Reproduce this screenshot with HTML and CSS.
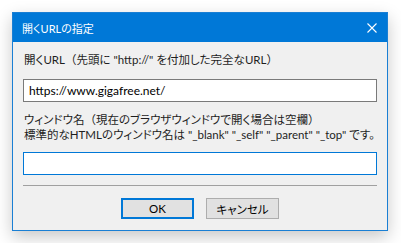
FILE: index.html
```html
<!DOCTYPE html>
<html>
<head>
	<meta charset="utf-8">
	<title>開くURLの指定</title>
	<link rel="stylesheet" href="styles.css">
</head>
<body>
	<div class=dialog>
		<div class=titlebar>
			<span class=title>開くURLの指定</span>
			<svg class=close width="10" height="10" viewBox="0 0 10 10">
				<path d="M0.5 0.5 L9.5 9.5 M9.5 0.5 L0.5 9.5" stroke="#fff" stroke-width="1.1" fill="none"/>
			</svg>
		</div>
		<div class=content>
			<label class=label for=url>開くURL<span class=wide>（</span>先頭に "http://" を付加した完全なURL<span class=wide>）</span></label>
			<input type=text id=url class=field value="https://www.gigafree.net/">
			<label class="label two" for=target>ウィンドウ名<span class=wide>（</span>現在のブラウザウィンドウで開く場合は空欄<span class=wide>）</span><br>標準的なHTMLのウィンドウ名は "_blank" "_self" "_parent" "_top" です。</label>
			<input type=text id=target class="field focus">
			<hr class=sep>
			<div class=buttons>
				<button type=button class="btn default">OK</button>
				<button type=button class=btn>キャンセル</button>
			</div>
		</div>
	</div>
</body>
</html>
```

FILE: styles.css
```css
* {
	box-sizing: border-box;
}
body {
	margin: 0;
	background: #fff;
	font-family: Lato, "Noto Sans CJK JP", sans-serif;
	font-size: 11.5px;
	font-feature-settings: "palt";
	color: #000;
}
.dialog {
	width: 376px;
	margin: 12px;
	border: 1px solid #1a7fd4;
	background: #f0f0f0;
	box-shadow: 0 6px 16px rgba(0,0,0,0.22);
}
.titlebar {
	height: 29px;
	background: #0078d7;
	color: #fff;
	display: flex;
	align-items: center;
	justify-content: space-between;
	padding: 0 10px 0 9px;
}
.title {
	font-size: 11px;
}
.content {
	padding: 10px 10px 11px 10px;
	display: flex;
	flex-direction: column;
}
.label {
	display: block;
	line-height: 16px;
	padding-left: 1px;
	color: #1e1e1e;
	white-space: nowrap;
}
.wide {
	font-feature-settings: normal;
}
.label.two {
	line-height: 15px;
	margin-top: 10px;
}
.field {
	display: block;
	width: 354px;
	height: 23px;
	margin: 11px 0 0 0;
	border: 1px solid #7a7a7a;
	background: #fff;
	font-family: inherit;
	font-size: 12px;
	font-feature-settings: "palt";
	padding: 0 5px;
	color: #000;
	outline: none;
}
.field.focus {
	border-color: #0078d7;
	margin-top: 10px;
}
.sep {
	width: 354px;
	margin: 10px 0 0 0;
	border: none;
	border-top: 1px solid #a0a0a0;
	height: 0;
}
.buttons {
	display: flex;
	justify-content: center;
	gap: 12px;
	margin-top: 12px;
}
.btn {
	width: 73px;
	height: 21px;
	background: #e1e1e1;
	border: 1px solid #adadad;
	font-family: inherit;
	font-size: 11.5px;
	font-feature-settings: "palt";
	color: #000;
	padding: 0;
}
.btn.default {
	border: 2px solid #0078d7;
}
```
